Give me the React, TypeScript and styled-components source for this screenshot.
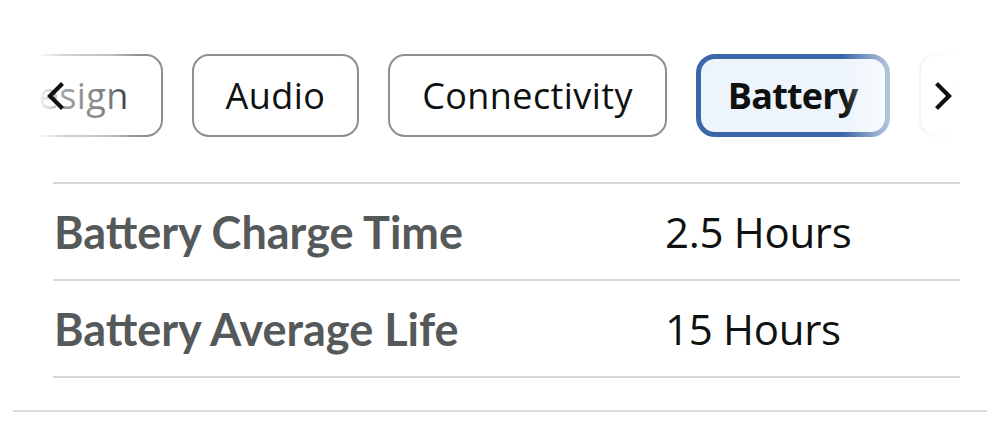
import React from "react";
import styled, { createGlobalStyle, css } from "styled-components";

const GlobalStyle = createGlobalStyle`
  html, body { margin: 0; padding: 0; background: #ffffff; }
  body { font-family: "Open Sans", "Noto Sans", sans-serif; color: #0f1111; }
`;

const Page = styled.div`
  width: 1000px;
  height: 422px;
  padding-top: 53px;
  box-sizing: border-box;
  overflow: hidden;
`;

const TabBar = styled.div`
  position: relative;
  margin: 0 40px;
  height: 86px;
  overflow: hidden;
`;

const Track = styled.div<{ $offset: number }>`
  display: flex;
  gap: 29px;
  padding-top: 1px;
  transform: translateX(${(p) => -p.$offset}px);
`;

const Tab = styled.button<{ $active?: boolean }>`
  flex: none;
  height: 83px;
  box-sizing: border-box;
  padding: 0 32px;
  border-radius: 17px;
  border: 2px solid #8d9090;
  background: #ffffff;
  font-family: "Open Sans", "Noto Sans", sans-serif;
  font-size: 36px;
  font-weight: 400;
  color: #0f1111;
  letter-spacing: 0.4px;
  ${(p) =>
    p.$active &&
    css`
      border: 5px solid #3b67a9;
      background: #edf4fc;
      font-weight: 700;
      border-radius: 19px;
      padding: 0 27px;
      letter-spacing: -0.8px;
    `}
`;

const Fade = styled.div<{ $side: "left" | "right" }>`
  position: absolute;
  top: 0;
  bottom: 0;
  display: flex;
  align-items: center;
  box-sizing: border-box;
  ${(p) =>
    p.$side === "left"
      ? css`
          left: 0;
          width: 100px;
          padding-left: 5px;
          justify-content: flex-start;
          background: linear-gradient(
            to right,
            rgba(255, 255, 255, 0.95) 0%,
            rgba(255, 255, 255, 0.6) 25%,
            rgba(255, 255, 255, 0.45) 70%,
            rgba(255, 255, 255, 0) 100%
          );
        `
      : css`
          right: 0;
          width: 118px;
          padding-right: 5px;
          justify-content: flex-end;
          background: linear-gradient(
            to right,
            rgba(255, 255, 255, 0) 0%,
            rgba(255, 255, 255, 0.55) 35%,
            rgba(255, 255, 255, 0.85) 60%,
            rgba(255, 255, 255, 0.97) 80%,
            rgba(255, 255, 255, 1) 100%
          );
        `}
`;

const Chevron = ({ dir }: { dir: "left" | "right" }) => (
  <svg width="22" height="30" viewBox="0 0 22 30">
    <polyline
      points={dir === "left" ? "16,4 5,15 16,26" : "5,4 16,15 5,26"}
      fill="none"
      stroke="#0f1111"
      strokeWidth="4.2"
      strokeLinecap="square"
      strokeLinejoin="miter"
    />
  </svg>
);

const Table = styled.div`
  margin: 43px 40px 0 53px;
  border-top: 2px solid #d5d9d9;
`;

const Row = styled.div`
  display: grid;
  grid-template-columns: 612px 1fr;
  align-items: center;
  height: 95px;
  border-bottom: 2px solid #d5d9d9;
`;

const Label = styled.div`
  padding-left: 1px;
  font-family: "Lato", "Open Sans", sans-serif;
  font-weight: 700;
  font-size: 45px;
  color: #565959;
`;

const Value = styled.div`
  font-family: "Open Sans", "Noto Sans", sans-serif;
  font-size: 42px;
  color: #0f1111;
  letter-spacing: -0.3px;
`;

const Separator = styled.div`
  margin: 32px 13px 0;
  border-top: 2px solid #dcdcdc;
`;

const tabs = ["Design", "Audio", "Connectivity", "Battery", "Weight"];
const rows = [
  { label: "Battery Charge Time", value: "2.5 Hours" },
  { label: "Battery Average Life", value: "15 Hours" },
];

export default function App() {
  return (
    <>
      <GlobalStyle />
      <Page>
        <TabBar>
          <Track $offset={62}>
            {tabs.map((t) => (
              <Tab key={t} $active={t === "Battery"}>
                {t}
              </Tab>
            ))}
          </Track>
          <Fade $side="left">
            <Chevron dir="left" />
          </Fade>
          <Fade $side="right">
            <Chevron dir="right" />
          </Fade>
        </TabBar>
        <Table>
          {rows.map((r) => (
            <Row key={r.label}>
              <Label>{r.label}</Label>
              <Value>{r.value}</Value>
            </Row>
          ))}
        </Table>
        <Separator />
      </Page>
    </>
  );
}
